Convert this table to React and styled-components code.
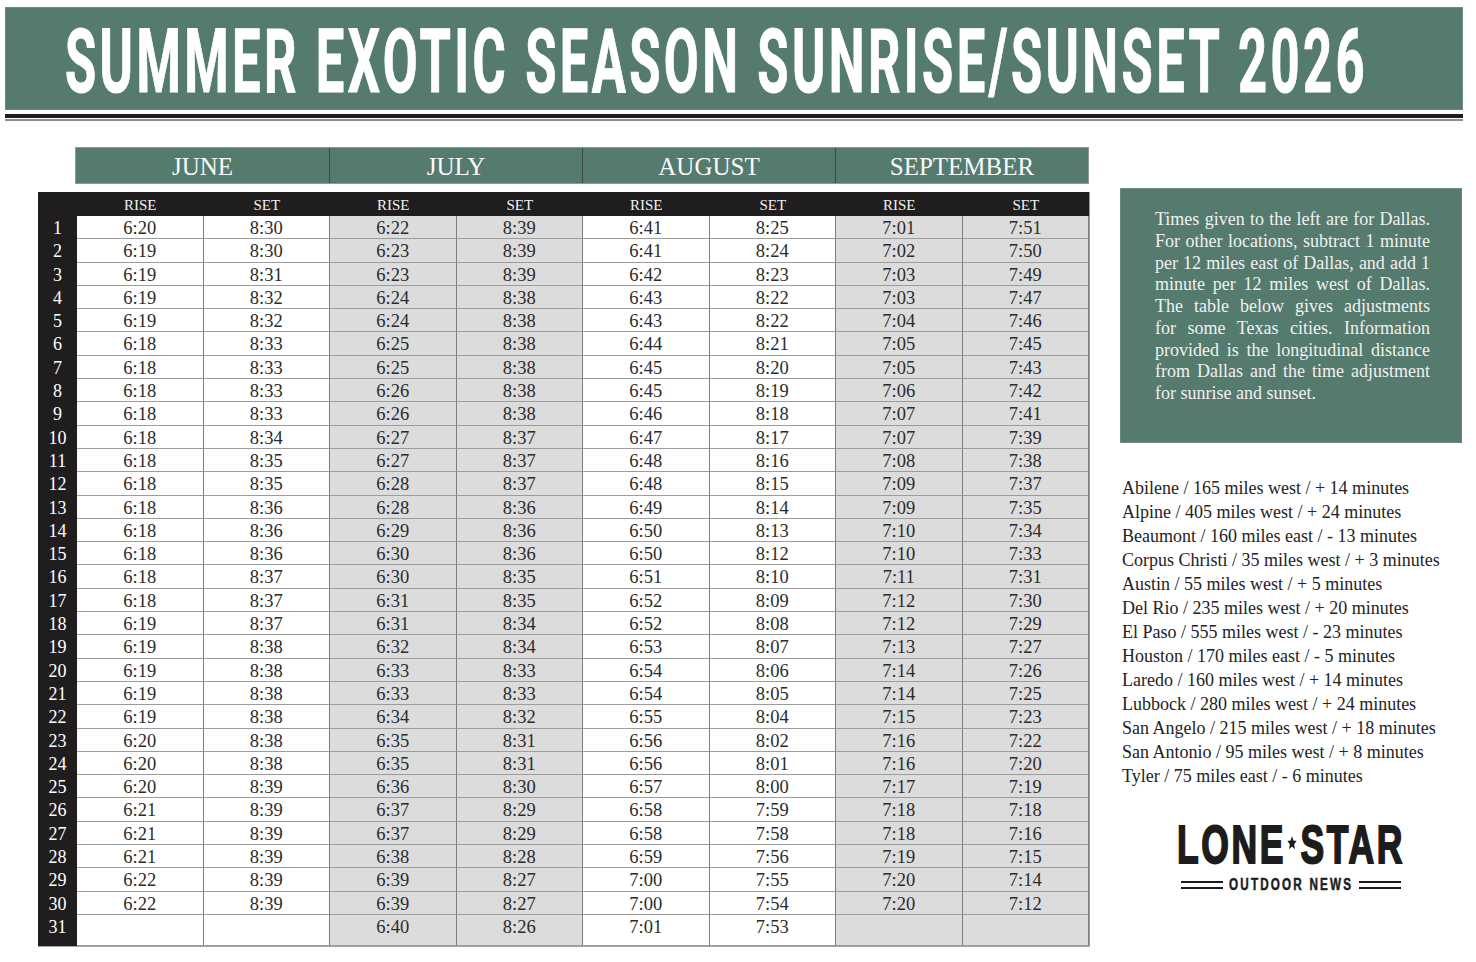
import React, { useLayoutEffect, useRef, useState } from "react";
import styled, { createGlobalStyle } from "styled-components";

const GREEN = "#557a6e";

const Global = createGlobalStyle`
  html, body { margin: 0; padding: 0; background: #fff; }
  body { font-family: "Liberation Serif", "Times New Roman", serif; }
`;

const Page = styled.div`
  width: 1476px;
  height: 962px;
  overflow: hidden;
  background: #fff;
  padding-top: 7px;
  box-sizing: border-box;
`;

const Banner = styled.header`
  margin: 0 13px 0 5px;
  height: 103px;
  box-sizing: border-box;
  background: ${GREEN};
  border: 1px solid #6a8b80;
  display: flex;
  align-items: center;
  padding: 6px 0 0 59px;
`;

const FitBox = styled.div`
  width: ${(p) => p.$w}px;
  white-space: nowrap;
`;

const FitInner = styled.span`
  display: inline-block;
  white-space: nowrap;
  transform-origin: left center;
`;

function FitText({ width, children, className }) {
  const ref = useRef(null);
  const [scale, setScale] = useState(1);
  useLayoutEffect(() => {
    const measure = () => {
      const el = ref.current;
      if (el && el.offsetWidth) setScale(width / el.offsetWidth);
    };
    measure();
    if (document.fonts && document.fonts.ready) document.fonts.ready.then(measure);
  }, [width]);
  return (
    <FitBox $w={width}>
      <FitInner ref={ref} className={className} style={{ transform: `scaleX(${scale})` }}>
        {children}
      </FitInner>
    </FitBox>
  );
}

const Title = styled(FitText)`
  font-family: Roboto, "Liberation Sans", sans-serif;
  font-weight: 700;
  font-size: 89px;
  line-height: 1;
  letter-spacing: 6px;
  color: #fff;
  -webkit-text-stroke: 1px #fff;
`;

const RuleThick = styled.div`
  margin: 4px 13px 0 5px;
  height: 4px;
  background: #1d1d1d;
`;

const RuleThin = styled.div`
  margin: 1px 13px 0 5px;
  height: 2px;
  background: #8c8c8c;
`;

const Content = styled.main`
  display: flex;
  align-items: flex-start;
  margin-top: 26px;
  padding-left: 38px;
`;

const LeftCol = styled.section`
  width: 1052px;
  display: flex;
  flex-direction: column;
`;

const MonthBar = styled.div`
  margin-left: 37px;
  width: 1014px;
  height: 37px;
  box-sizing: border-box;
  display: grid;
  grid-template-columns: repeat(4, 1fr);
  background: ${GREEN};
  border: 1px solid #8d9c97;
`;

const Month = styled.div`
  display: flex;
  align-items: center;
  justify-content: center;
  color: #fafafa;
  font-size: 25px;
  padding-top: 2px;
  border-left: ${(p) => (p.$first ? "none" : "1px solid #3c4a45")};
`;

const Table = styled.div`
  margin-top: 8px;
  width: 1052px;
  height: 755px;
  box-sizing: border-box;
  display: grid;
  grid-template-columns: 39px repeat(8, minmax(0, 1fr));
  grid-template-rows: 24px repeat(30, 23.3px) minmax(0, 1fr);
  background: #1f1d1e;
  border-right: 1px solid #9a9a9a;
  border-bottom: 1px solid #a5a5a5;
`;

const HeadCell = styled.div`
  display: flex;
  align-items: center;
  justify-content: center;
  color: #f2f2f2;
  font-size: 15px;
  padding-top: 2px;
  overflow: hidden;
`;

const DayCell = styled.div`
  display: flex;
  justify-content: center;
  color: #fff;
  font-size: 18px;
  line-height: 23px;
  padding-top: 1px;
  overflow: hidden;
`;

const DataCell = styled.div`
  display: flex;
  justify-content: center;
  box-sizing: border-box;
  overflow: hidden;
  background: ${(p) => (p.$shade ? "#dcdcdd" : "#ffffff")};
  border-right: 1px solid #7e7e7e;
  border-bottom: 1px solid #9c9c9c;
  color: #2b2b2b;
  font-size: 18.5px;
  line-height: 23px;
  padding-top: 1px;
`;

const SideCol = styled.aside`
  width: 342px;
  margin-left: 30px;
  margin-top: 41px;
  display: flex;
  flex-direction: column;
`;

const Note = styled.div`
  height: 255px;
  box-sizing: border-box;
  background: ${GREEN};
  border: 1px solid #6d8b81;
  padding: 20px 31px 0 34px;
  color: #f1f1f1;
  font-size: 18px;
  line-height: 21.75px;
`;

const NoteLine = styled.span`
  display: block;
  text-align: justify;
  text-align-last: ${(p) => (p.$last ? "left" : "justify")};
`;

const Cities = styled.ul`
  list-style: none;
  margin: 33px 0 0;
  padding: 0 0 0 2px;
  font-size: 18px;
  line-height: 24px;
  color: #232323;
`;

const City = styled.li`
  white-space: nowrap;
`;

const Logo = styled.div`
  margin-top: 29px;
  display: flex;
  flex-direction: column;
  align-items: center;
  color: #1c1c1c;
`;

const LogoWord = styled(FitText)`
  font-family: "Liberation Sans", Arial, sans-serif;
  font-weight: 700;
  font-size: 54px;
  line-height: 1;
  letter-spacing: 4px;
  -webkit-text-stroke: 2px #1c1c1c;
`;

const StarGlyph = styled.svg`
  width: 18px;
  height: 18px;
  margin: 0 4px 12px 0;
  vertical-align: middle;
`;

const SubRow = styled.div`
  display: flex;
  align-items: center;
  gap: 6px;
  margin-top: 5px;
`;

const DoubleLine = styled.div`
  width: 42px;
  height: 8px;
  box-sizing: border-box;
  border-top: 2px solid #1c1c1c;
  border-bottom: 2px solid #1c1c1c;
`;

const SubText = styled(FitText)`
  font-family: "Liberation Sans", Arial, sans-serif;
  font-weight: 700;
  font-size: 16px;
  line-height: 1;
  letter-spacing: 3px;
  -webkit-text-stroke: 0.5px #1c1c1c;
`;

const months = ["JUNE", "JULY", "AUGUST", "SEPTEMBER"];

const cols = [
  "6:20 6:19 6:19 6:19 6:19 6:18 6:18 6:18 6:18 6:18 6:18 6:18 6:18 6:18 6:18 6:18 6:18 6:19 6:19 6:19 6:19 6:19 6:20 6:20 6:20 6:21 6:21 6:21 6:22 6:22 -",
  "8:30 8:30 8:31 8:32 8:32 8:33 8:33 8:33 8:33 8:34 8:35 8:35 8:36 8:36 8:36 8:37 8:37 8:37 8:38 8:38 8:38 8:38 8:38 8:38 8:39 8:39 8:39 8:39 8:39 8:39 -",
  "6:22 6:23 6:23 6:24 6:24 6:25 6:25 6:26 6:26 6:27 6:27 6:28 6:28 6:29 6:30 6:30 6:31 6:31 6:32 6:33 6:33 6:34 6:35 6:35 6:36 6:37 6:37 6:38 6:39 6:39 6:40",
  "8:39 8:39 8:39 8:38 8:38 8:38 8:38 8:38 8:38 8:37 8:37 8:37 8:36 8:36 8:36 8:35 8:35 8:34 8:34 8:33 8:33 8:32 8:31 8:31 8:30 8:29 8:29 8:28 8:27 8:27 8:26",
  "6:41 6:41 6:42 6:43 6:43 6:44 6:45 6:45 6:46 6:47 6:48 6:48 6:49 6:50 6:50 6:51 6:52 6:52 6:53 6:54 6:54 6:55 6:56 6:56 6:57 6:58 6:58 6:59 7:00 7:00 7:01",
  "8:25 8:24 8:23 8:22 8:22 8:21 8:20 8:19 8:18 8:17 8:16 8:15 8:14 8:13 8:12 8:10 8:09 8:08 8:07 8:06 8:05 8:04 8:02 8:01 8:00 7:59 7:58 7:56 7:55 7:54 7:53",
  "7:01 7:02 7:03 7:03 7:04 7:05 7:05 7:06 7:07 7:07 7:08 7:09 7:09 7:10 7:10 7:11 7:12 7:12 7:13 7:14 7:14 7:15 7:16 7:16 7:17 7:18 7:18 7:19 7:20 7:20 -",
  "7:51 7:50 7:49 7:47 7:46 7:45 7:43 7:42 7:41 7:39 7:38 7:37 7:35 7:34 7:33 7:31 7:30 7:29 7:27 7:26 7:25 7:23 7:22 7:20 7:19 7:18 7:16 7:15 7:14 7:12 -",
].map((s) => s.split(" ").map((v) => (v === "-" ? "" : v)));

const noteLines = [
  "Times given to the left are for Dallas.",
  "For other locations, subtract 1 minute",
  "per 12 miles east of Dallas, and add 1",
  "minute per 12 miles west of Dallas.",
  "The table below gives adjustments",
  "for some Texas cities. Information",
  "provided is the longitudinal distance",
  "from Dallas and the time adjustment",
  "for sunrise and sunset.",
];

const cities = [
  "Abilene / 165 miles west / + 14 minutes",
  "Alpine / 405 miles west / + 24 minutes",
  "Beaumont / 160 miles east / - 13 minutes",
  "Corpus Christi / 35 miles west / + 3 minutes",
  "Austin / 55 miles west / + 5 minutes",
  "Del Rio / 235 miles west / + 20 minutes",
  "El Paso / 555 miles west / - 23 minutes",
  "Houston / 170 miles east / - 5 minutes",
  "Laredo / 160 miles west / + 14 minutes",
  "Lubbock / 280 miles west / + 24 minutes",
  "San Angelo / 215 miles west / + 18 minutes",
  "San Antonio / 95 miles west / + 8 minutes",
  "Tyler / 75 miles east / - 6 minutes",
];

export default function App() {
  const days = Array.from({ length: 31 }, (_, i) => i);
  return (
    <Page>
      <Global />
      <Banner>
        <Title width={1303}>SUMMER EXOTIC SEASON SUNRISE/SUNSET 2026</Title>
      </Banner>
      <RuleThick />
      <RuleThin />
      <Content>
        <LeftCol>
          <MonthBar>
            {months.map((m, i) => (
              <Month key={m} $first={i === 0}>{m}</Month>
            ))}
          </MonthBar>
          <Table>
            <HeadCell />
            {cols.map((_, c) => (
              <HeadCell key={"h" + c}>{c % 2 === 0 ? "RISE" : "SET"}</HeadCell>
            ))}
            {days.map((d) => (
              <React.Fragment key={d}>
                <DayCell>{d + 1}</DayCell>
                {cols.map((col, c) => (
                  <DataCell key={c} $shade={Math.floor(c / 2) % 2 === 1}>
                    {col[d]}
                  </DataCell>
                ))}
              </React.Fragment>
            ))}
          </Table>
        </LeftCol>
        <SideCol>
          <Note>
            {noteLines.map((l, i) => (
              <NoteLine key={i} $last={i === noteLines.length - 1}>{l}</NoteLine>
            ))}
          </Note>
          <Cities>
            {cities.map((c) => (
              <City key={c}>{c}</City>
            ))}
          </Cities>
          <Logo>
            <LogoWord width={228}>
              LONE
              <StarGlyph viewBox="0 0 24 24">
                <path d="M12 2.5l2.8 6.2 6.7.6-5.1 4.4 1.6 6.6L12 16.8l-6 3.5 1.6-6.6-5.1-4.4 6.7-.6z" fill="#1c1c1c" />
              </StarGlyph>
              STAR
            </LogoWord>
            <SubRow>
              <DoubleLine />
              <SubText width={124}>OUTDOOR NEWS</SubText>
              <DoubleLine />
            </SubRow>
          </Logo>
        </SideCol>
      </Content>
    </Page>
  );
}
